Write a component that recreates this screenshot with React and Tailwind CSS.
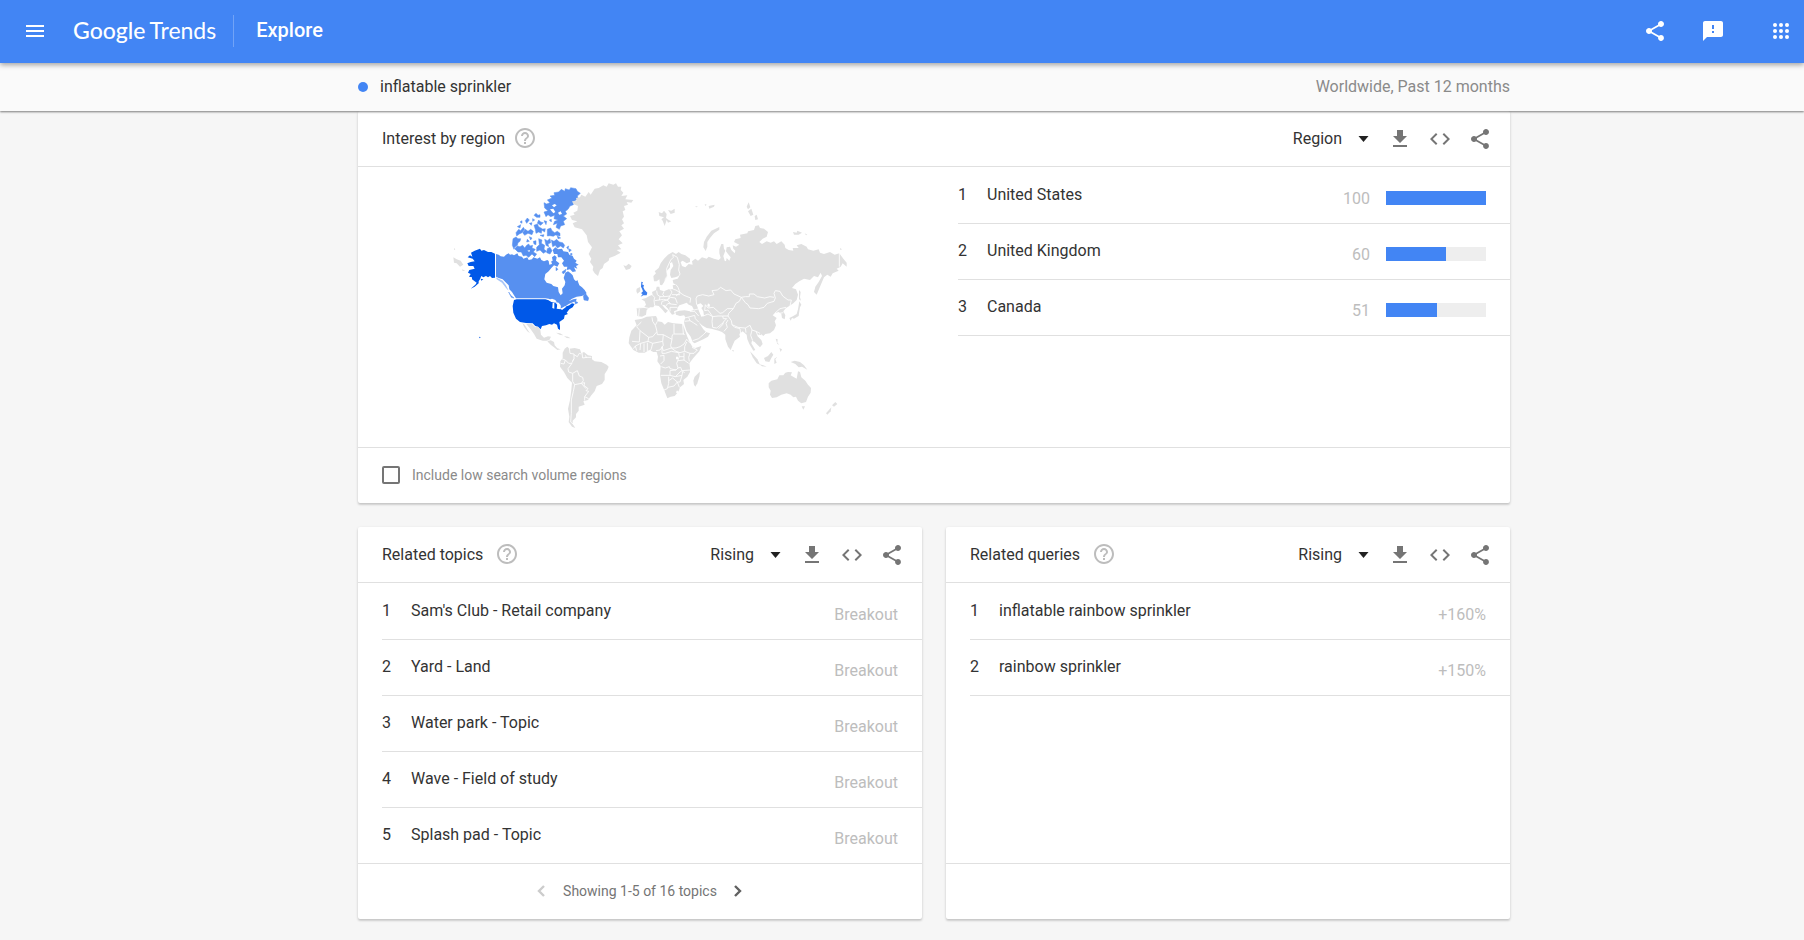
import React from "react";
import { MdMenu, MdShare, MdFeedback, MdHelpOutline, MdCode } from "react-icons/md";

const regions = [
  { name: "United States", value: 100 },
  { name: "United Kingdom", value: 60 },
  { name: "Canada", value: 51 },
];
const topics = ["Sam's Club - Retail company", "Yard - Land", "Water park - Topic", "Wave - Field of study", "Splash pad - Topic"].map(
  (name) => ({ name, value: "Breakout" })
);
const queries = [
  { name: "inflatable rainbow sprinkler", value: "+160%" },
  { name: "rainbow sprinkler", value: "+150%" },
];

function AppsIcon() {
  return (
    <svg viewBox="0 0 24 24" className="size-6" fill="currentColor" aria-hidden="true">
      {[6, 12, 18].map((y) => [6, 12, 18].map((x) => <circle key={`${x}-${y}`} cx={x} cy={y} r="2" />))}
    </svg>
  );
}

function DownloadIcon() {
  return (
    <svg viewBox="0 0 24 24" className="size-6" fill="currentColor" aria-hidden="true">
      <path d="M19 9h-4V3H9v6H5l7 7 7-7zM5 18v2h14v-2H5z" />
    </svg>
  );
}

function CaretIcon() {
  return (
    <svg viewBox="0 0 24 24" className="pointer-events-none absolute right-0 size-6 text-[#212121]" fill="currentColor" aria-hidden="true">
      <path d="M6.5 9h10l-5 6z" />
    </svg>
  );
}

function ChevronIcon({ points }) {
  return (
    <svg viewBox="0 0 24 24" className="size-6" fill="none" stroke="currentColor" strokeWidth="2.4" aria-hidden="true">
      <polyline points={points} />
    </svg>
  );
}

function IconButton({ label, children, className = "w-10" }) {
  return (
    <button type="button" aria-label={label} className={`flex h-10 items-center justify-center ${className}`}>
      {children}
    </button>
  );
}

function CardHeader({ title, option, others, helpGap = "ml-2" }) {
  return (
    <header className="flex h-14 items-center border-b border-[#e0e0e0] pr-2.5 pl-6">
      <h2 className="text-base text-[#333333]">{title}</h2>
      <button type="button" aria-label={`Help: ${title}`} className={`pb-0.5 text-[#bdbdbd] ${helpGap}`}>
        <MdHelpOutline className="size-6" />
      </button>
      <div className="relative mr-1 ml-auto flex items-center">
        <select aria-label={`${title} view`} defaultValue={option} className="field-sizing-content appearance-none bg-transparent pr-[34px] text-base text-[#333333]">
          {[option, ...others].map((o) => (
            <option key={o}>{o}</option>
          ))}
        </select>
        <CaretIcon />
      </div>
      <div className="flex text-[#757575]">
        <IconButton label="Download CSV"><DownloadIcon /></IconButton>
        <IconButton label="Embed"><MdCode className="size-6" /></IconButton>
        <IconButton label="Share"><MdShare className="size-6" /></IconButton>
      </div>
    </header>
  );
}

function RankedList({ items, bars = false }) {
  return (
    <ol className="pl-6">
      {items.map((item, i) => (
        <li key={item.name} className="flex h-14 items-center pr-6 text-base text-[#333333] shadow-[0_1px_0_#e0e0e0]">
          <span className="w-[29px]">{i + 1}</span>
          <span className="flex-1">{item.name}</span>
          <span className="pt-2 text-[#bdbdbd]">{item.value}</span>
          {bars && (
            <span className="mt-1.5 ml-4 block h-3.5 w-[100px] bg-[#eeeeee]">
              <span className="block h-full bg-[#4285f4]" style={{ width: `${item.value}%` }} />
            </span>
          )}
        </li>
      ))}
    </ol>
  );
}

function Card({ children, className = "" }) {
  return (
    <section className={`rounded-xs bg-white shadow-[0_1px_3px_rgba(0,0,0,0.14),0_2px_2px_rgba(0,0,0,0.1)] ${className}`}>{children}</section>
  );
}

const canada = [
  "168,252 176,254 182,259 192,260 198,254 206,250 210,254 216,253 222,256 232,250 236,258 246,260 250,266 262,262 266,270 276,268 280,262 292,266 300,262 304,270 312,274 322,270 330,276 338,272 336,262 344,256 350,262 348,272 358,280 352,290 342,286 334,294 326,304 316,312 313,328 320,338 334,342 340,348 354,352 356,366 362,376 368,370 366,356 374,346 376,336 371,324 376,308 384,304 392,310 398,316 402,328 408,334 412,330 418,346 426,352 434,360 440,370 426,378 410,380 396,386 386,394 400,388 410,386 408,394 400,396 386,402 372,412 362,416 362,408 350,402 344,394 334,390 326,386 316,385 228,385 222,376 216,366 208,358 206,346 196,336 188,328 176,324 168,320",
  "338,240 346,232 354,238 366,236 370,244 384,246 388,254 398,258 402,266 410,272 406,278 416,284 408,288 412,296 402,292 408,304 398,306 390,298 380,300 382,290 372,290 366,280 372,272 364,262 354,262 352,252 342,252",
  "219,206 228,201 234,206 242,206 240,214 234,218 232,226 224,232 222,238 217,226",
  "224,236 232,228 240,230 248,226 254,234 260,226 266,222 270,228 278,226 276,234 286,238 280,246 290,252 284,260 276,252 266,262 258,256 250,258 244,246 234,246",
  "312,98 320,102 330,98 322,90 336,84 330,78 344,76 342,68 356,66 364,58 374,64 376,56 388,60 392,53 408,56 412,64 421,70 412,78 414,86 402,94 400,104 390,108 384,118 376,124 380,132 370,138 380,146 370,154 374,164 362,168 358,178 348,172 352,160 340,164 344,154 354,150 342,146 344,136 332,140 324,134 318,140 312,126 324,122 314,114",
  "322,178 332,174 336,182 344,188 352,184 360,190 360,198 346,195 340,199 330,197 322,198",
  "228,188 236,178 242,182 250,172 254,178 246,188 238,192 230,198", "248,188 256,178 264,184 272,178 280,184 276,194 264,190 254,196",
  "256,152 262,144 268,150 260,160", "282,136 288,130 294,136 300,134 300,142 290,142", "296,150 302,156 310,158 302,166 292,160",
  "282,166 292,162 296,170 306,176 304,190 296,186 288,190 286,178", "232,170 242,164 240,174", "312,152 320,154 318,164",
  "296,206 306,210 304,220 314,226 312,238 320,244 310,250 300,240 290,244 290,232 298,224", "314,208 322,212 330,206 332,218 324,222 326,230 318,226",
  "334,210 342,214 350,208 358,216 368,218 374,226 370,234 362,228 352,234 346,226 338,230", "322,236 330,232 336,242 330,252 320,248",
  "268,200 276,204 272,210", "280,214 288,212 288,224 282,222", "366,306 378,298 376,306 370,312",
  "430,378 436,370 446,384 444,392 432,390", "390,252 396,250 396,256", "404,392 414,398 406,402",
  "206,366 212,376 222,384 214,382", "348,292 354,298 348,302",
  "240,156 246,152 246,160", "268,160 276,158 274,166", "278,146 284,150 278,154", "300,196 312,194 310,200", "302,178 316,176 314,186",
  "262,208 268,214 260,216", "328,150 334,148 334,156", "386,236 394,240 388,246", "380,232 386,228 384,238", "352,198 362,204 354,206",
];

const unitedStates = [
  "83,262 90,256 97,260 93,248 104,242 116,238 120,236 124,242 132,240 144,246 154,246 165,251 165,323 156,324 150,318 144,322 138,318 130,322 124,318 120,328 124,322 116,334 116,340 104,350 92,356 106,344 110,338 104,334 96,328 96,322 87,320 92,312 84,308 88,300 104,296 100,288 86,288 82,280 92,276 104,274 98,266",
  "122,326 130,328 124,332",
  "230,388 316,388 326,391 334,396 346,398 352,404 350,416 364,418 376,410 388,406 396,400 404,402 398,412 388,418 380,428 384,432 374,436 372,446 358,456 360,468 360,480 354,476 351,464 342,460 336,464 328,462 318,466 306,468 302,478 294,470 286,468 278,460 258,459 240,456 228,446 220,428 218,408 222,390",
  "117,500 122,502 119,505",
];

const alaskaPanhandle = ["168,322 176,326 188,332 198,346 206,362 198,354 186,338 170,328"];

const restOfAmericas = [
  "258,461 276,462 286,472 294,470 301,480 303,494 312,503 324,499 333,500 328,510 320,512 308,512 290,506 282,492 272,478 262,466",
  "247,459 254,464 262,478 270,490 262,484 252,470",
  "322,514 332,511 342,516 344,526 352,535 362,538 352,540 342,532 332,524",
  "348,488 360,490 370,496 360,495", "372,498 384,500 392,505 380,504",
  "368,548 374,536 382,530 388,536 404,534 420,538 424,550 432,546 444,556 456,558 456,568 464,574 484,576 500,584 506,590 502,600 494,612 494,630 486,642 470,648 464,664 454,676 444,690 430,694 434,704 416,710 416,722 408,732 408,742 398,752 398,762 406,774 396,770 386,756 388,740 384,716 390,690 394,660 396,638 382,624 372,606 360,590 361,574 368,564",
  "390,138 404,134 400,128 412,122 414,108 400,102 396,94 410,92 408,84 420,82 424,74 436,80 446,66 452,74 464,56 476,54 490,46 500,50 506,40 520,44 528,40 534,50 544,50 542,60 550,68 544,78 562,76 556,88 580,90 574,98 560,96 564,104 552,108 556,120 548,124 552,140 546,148 552,160 544,166 552,176 538,184 546,196 536,208 548,220 534,226 544,238 530,240 542,248 524,258 508,264 506,272 492,282 488,294 480,300 474,318 464,310 458,300 460,290 450,276 454,266 446,252 456,232 444,216 440,196 426,178 404,172 398,160 412,154 396,150",
  "550,286 558,288 566,281 575,288 570,296 558,300", "40,262 50,268 62,272 70,284 60,290 50,280 42,278", "66,298 76,302 68,303", "42,234 46,238 42,240",
  "590,356 600,351 601,364 592,371 589,364",
];

const easternLand = [
  "40,318 48,310 44,304 56,294 62,280 72,266 84,254 98,246 108,252 116,246 124,252 136,256 150,266 150,276 140,280 128,272 122,276 126,288 136,292 146,282 158,284 156,274 166,266 174,272 186,262 200,266 206,260 222,266 236,270 242,264 238,250 238,238 244,222 250,222 252,236 256,242 250,258 254,272 258,274 260,264 268,272 272,262 264,252 258,244 260,232 270,230 274,240 284,250 286,242 280,236 278,226 288,230 298,224 282,216 286,208 302,204 300,194 322,190 324,184 342,180 346,168 356,166 360,174 372,176 384,186 380,200 368,206 358,216 366,222 380,214 392,218 402,214 410,222 424,214 434,224 436,234 446,240 460,242 458,234 476,234 470,226 484,222 500,230 504,238 520,242 536,238 540,248 552,252 570,246 584,254 598,250 610,266 620,278 620,290 608,280 602,290 590,296 596,302 578,310 572,320 562,314 552,322 546,336 540,350 530,374 522,366 526,350 536,336 546,318 542,308 534,322 522,318 510,330 492,326 478,334 466,342 456,354 468,358 474,374 470,390 460,400 448,408 438,414 430,424 436,436 434,448 426,444 424,432 416,426 404,430 398,436 410,444 404,454 408,466 402,480 390,490 376,492 370,498 360,490 352,498 364,510 368,522 360,532 352,524 344,516 336,512 334,520 346,540 340,542 328,522 322,508 320,494 308,484 298,492 300,500 284,512 278,526 272,540 264,530 256,508 256,494 246,486 236,482 214,476 200,474 186,466 176,456 190,478 198,486 210,490 204,500 190,508 164,520 158,516 152,500 140,484 134,466 132,456 136,442 132,436 120,438 108,434 106,426 118,422 134,421 150,424 162,420 156,408 146,404 140,398 130,402 118,406 112,414 112,420 102,424 104,432 96,434 90,426 84,416 74,406 66,404 74,414 84,422 76,430 66,418 56,408 44,406 40,412 30,412 20,420 18,434 6,440 -8,438 -10,414 12,412 18,404 14,394 4,388 18,384 28,378 38,374 36,366 48,360 50,350 58,350 60,360 72,364 86,358 100,358 98,346 108,344 100,340 98,330 112,326 116,318 106,322 94,324 90,314 92,300 100,288 96,276 90,280 90,292 80,304 82,318 74,334 66,346 60,344 58,328 50,334 42,334",
  "-16,450 6,446 20,440 48,438 52,446 52,454 66,456 74,464 84,456 100,460 128,462 134,478 142,500 150,518 158,532 166,534 184,528 178,544 160,564 148,580 150,594 150,606 142,620 130,630 132,642 120,652 116,664 104,678 92,680 82,685 74,664 64,640 60,616 62,588 52,574 54,560 50,546 40,546 28,540 14,548 -4,548 -20,540 -34,520 -32,502 -26,482 -10,466",
  "162,644 160,632 164,620 176,608 180,605 178,620 172,640 166,650",
  "386,640 394,632 412,628 418,616 430,616 436,608 444,606 456,607 452,616 462,622 470,626 474,604 480,606 484,622 496,632 504,644 513,654 512,668 504,680 498,696 484,700 474,692 468,680 460,682 452,674 440,670 424,674 410,682 396,684 390,674 392,662 386,652",
  "485,709 495,709 490,719", "586,696 592,702 582,710 576,706", "574,712 572,724 562,734 558,730",
  "452,576 464,572 480,576 492,586 502,599 486,590 476,592 466,582", "330,544 340,554 352,568 360,584 350,580 338,562", "358,583 370,586 380,590 366,589",
  "372,564 384,558 394,546 400,554 394,564 388,576 376,574", "403,566 412,560 406,568 410,578 403,582", "407,506 413,508 412,518 418,524 412,522", "418,534 426,538 422,546",
  "478,394 484,404 480,412 478,424 476,438 462,446 456,444 452,452 448,444 460,438 470,432 474,418 476,406", "477,360 482,366 480,382 483,392 477,388",
  "238,171 238,179 222,190 210,204 202,216 202,230 197,243 190,232 192,216 200,200 214,182", "56,126 66,130 72,122 80,132 78,144 86,150 94,154 84,158 80,150 74,168 68,152 64,148 72,142 58,138", "84,120 94,122 104,116 104,128 92,132",
  "320,110 326,97 331,112 324,118", "324,124 334,116 340,134 332,138", "344,138 350,134 354,148 346,150", "459,186 470,188 472,182 486,188 476,194 462,194", "494,190 502,194 498,196",
  "166,108 174,110 168,112", "194,102 200,104 196,108", "206,108 224,104 222,110 208,116", "600,234 606,238 601,240", "276,540 281,540 280,546", "356,472 364,496 358,494",
];

const europeAsiaBorders = [
  "74,346 76,326 82,318 80,296 92,270 100,262 98,254", "98,254 112,262 118,284 116,300 120,312 112,326",
  "108,344 114,352 120,368 132,376 152,384 150,398", "100,358 108,360 120,368", "72,364 68,374 74,380 90,378 96,366 90,358", "50,362 52,374 60,380 58,390 70,388 82,390 90,378", "96,374 120,374",
  "36,374 44,382 42,392 44,406", "60,380 74,380", "44,392 58,390", "64,404 66,394 82,390 92,402 110,404", "76,410 84,400 92,402", "90,424 90,412 112,412", "82,390 92,382 106,384 112,400",
  "120,368 108,378", "12,412 30,416", "-8,414 16,412", "-2,416 -4,438",
  "162,420 178,416", "150,424 164,424 176,438", "164,436 166,446 176,456", "134,444 150,440 164,436", "146,442 150,452 160,458 172,466", "134,454 150,452", "158,512 176,506 190,494 198,486",
  "170,404 168,386 172,378 188,374 206,378 222,374 216,362 232,360 242,352 258,362 272,360 282,372 304,382", "304,382 298,394 288,400 280,416 262,416 248,428 240,430 220,412 204,414 196,404 194,422",
  "304,382 316,380 328,380 328,372 342,372 352,380 374,384 390,380 402,382", "304,382 316,398 324,404 330,414 356,416 372,412 382,400 402,394 406,384 402,370 406,362 420,364 428,378 444,390 454,390 450,408",
  "280,416 266,430 264,438 274,452 276,464 294,472 316,474 330,466", "316,474 318,488", "330,466 336,480 348,484 360,490", "336,480 332,496 338,512", "348,484 354,498 364,506",
  "194,422 204,420 218,440 234,438 248,438 264,438", "190,438 204,432 218,440 216,454 218,472", "248,438 250,446 260,446 250,456 248,464 236,476", "218,472 230,474 250,458", "264,450 258,460 262,472 252,484", "276,464 284,472 300,476 302,490",
  "404,430 420,416 438,412", "598,248 598,290", "418,430 430,428",
];

const africaBorders = [
  "128,462 130,492 134,494", "102,462 102,492 132,492", "100,492 96,498 96,508 70,494 52,494 50,480 46,466 52,454", "36,442 38,454 46,466", "50,486 38,500 26,502 0,482 -10,470 4,456", "0,482 -2,516 -24,514", "26,502 24,514 2,520 0,540", "70,494 68,514 38,520 24,514",
  "38,520 34,536 30,544", "68,514 70,526 60,540 48,542", "96,508 92,526 94,534 70,542 66,530", "94,534 108,534 120,530 132,522 140,508 152,520", "140,516 134,530 134,544 120,548 108,544 94,534", "134,544 150,550 162,550 172,540 156,532",
  "66,530 66,550 76,550 94,544 116,548 118,560 110,580 114,594 108,600 90,596 88,590 76,594 64,590", "60,558 72,556 72,572 62,582", "118,560 132,560 132,548", "132,560 132,570 146,580", "114,572 132,570", "114,594 122,592 126,602 150,600",
  "108,600 90,602 90,616 62,616", "90,616 106,620 120,606 126,602", "106,620 126,616 128,604 134,608", "86,620 86,640 82,656 72,660", "86,632 98,624 112,636 102,648 84,652", "112,636 120,636 126,616", "112,636 118,652",
  "2,520 -14,528 -20,536", "-14,528 -10,542", "12,520 12,546", "22,518 22,544", "150,550 146,562 148,574",
];

const southAmericaBorders = [
  "388,534 390,550 402,552 402,566 396,578", "364,566 376,570 386,580 396,580 384,596 386,606 398,610 398,634", "402,566 398,572", "402,554 412,560 418,550 424,552", "426,548 428,564 440,562 454,562", "436,556 440,564", "362,580 372,582 376,570",
  "398,610 412,602 418,618 428,622 430,632 424,640 404,644 398,634", "404,644 400,664 394,690 394,730 392,756 402,764", "424,640 434,638 432,646 444,656 438,662 446,664 434,680 434,692", "424,640 438,656", "434,680 446,686",
];

const polygons = (list) => list.map((points) => <polygon key={points} points={points} />);
const lines = (list) => list.map((points) => <polyline key={points} points={points} />);

function WorldMap() {
  return (
    <svg viewBox="-246 -9 1728 840" className="h-[280px] w-full" role="img" aria-label="Interest by region on a world map">
      <g fill="#5790f0">{polygons(canada)}</g>
      <g fill="none" stroke="#5790f0" strokeWidth="1.5">{polygons(canada.slice(2))}</g>
      <g fill="#0058e8">{polygons(unitedStates)}</g>
      <g fill="#a9c6f7">{polygons(alaskaPanhandle)}</g>
      <g fill="#e0e0e0">{polygons(restOfAmericas)}</g>
      <g fill="none" stroke="#ffffff" strokeWidth="2.5" strokeLinejoin="round">{lines(southAmericaBorders)}</g>
      <g fill="#ffffff">
        <polygon points="326,390 336,386 346,390 350,396 338,396" />
        <polygon points="338,398 343,398 343,416 337,414" />
        <polygon points="346,396 356,398 362,406 360,418 352,414 352,404" />
        <polygon points="362,416 376,408 378,411 366,420" />
        <polygon points="326,274 332,270 336,282 328,284" />
        <polygon points="326,164 336,158 338,168 330,172" />
        <polygon points="336,106 344,102 350,106 342,112" />
        <polygon points="330,118 340,116 346,126 340,130" />
        <polygon points="354,128 362,124 366,132 358,134" />
        <polygon points="262,242 270,240 268,246" />
      </g>
      <polygon fill="#3b7ded" points="604,335 609,337 606,343 612,346 610,352 614,360 622,368 620,376 610,376 602,380 608,372 603,370 609,364 606,356 603,350" />
      <g transform="translate(600 0)">
        <g fill="#e0e0e0">{polygons(easternLand)}</g>
        <g fill="#ffffff">
          <polygon points="170,404 182,400 190,408 184,414 190,424 192,438 184,440 178,426" />
          <polygon points="204,400 210,404 208,412 202,408" />
          <polygon points="108,560 114,560 114,568 108,568" />
          <polygon points="110,662 116,662 114,670 108,668" />
        </g>
        <g fill="none" stroke="#ffffff" strokeWidth="2.5" strokeLinejoin="round">
          {lines(europeAsiaBorders)}
          {lines(africaBorders)}
        </g>
      </g>
    </svg>
  );
}

export default function App() {
  return (
    <div className="min-h-screen bg-[#f6f6f6] pb-5 font-['Roboto',sans-serif]">
      <div className="sticky top-0 z-10">
        <header className="relative z-10 flex h-[63px] items-center bg-[#4285f4] pr-[11px] pb-px pl-[23px] text-white shadow-[0_2px_5px_rgba(0,0,0,0.35)]">
          <button type="button" aria-label="Main menu"><MdMenu className="size-6" /></button>
          <a href="#home" className="ml-[26px] flex items-baseline gap-1 pb-0.5 font-['Lato',sans-serif] text-[23px]">
            <span className="font-medium">Google</span>
            <span>Trends</span>
          </a>
          <span className="ml-[17px] h-8 w-px bg-white/25" />
          <h1 className="ml-[22px] pb-0.5 text-xl font-medium">Explore</h1>
          <nav className="ml-auto flex items-center">
            <IconButton label="Share"><MdShare className="size-6" /></IconButton>
            <IconButton label="Send feedback" className="ml-[18px] w-10"><MdFeedback className="size-6" /></IconButton>
            <IconButton label="Google apps" className="ml-9 w-6"><AppsIcon /></IconButton>
          </nav>
        </header>
        <div className="bg-[#fafafa] pl-16 shadow-[0_1px_2px_rgba(0,0,0,0.5)]">
          <div className="mx-auto flex h-12 max-w-[1152px] items-center text-base">
            <span className="size-2.5 rounded-full bg-[#4285f4]" />
            <span className="ml-3 text-[#333333]">inflatable sprinkler</span>
            <span className="ml-auto text-[#8a8a8a]">Worldwide, Past 12 months</span>
          </div>
        </div>
      </div>

      <main className="pl-16">
        <div className="mx-auto grid max-w-[1152px] grid-cols-2 gap-6">
          <Card className="col-span-2">
            <CardHeader title="Interest by region" option="Region" others={["City"]} />
            <div className="grid min-h-[280px] grid-cols-2">
              <WorldMap />
              <RankedList items={regions} bars />
            </div>
            <footer className="flex h-14 items-center border-t border-[#e0e0e0] px-6 pb-0.5">
              <label className="flex items-center gap-3 text-sm text-[#8a8a8a]">
                <input type="checkbox" className="size-[18px] appearance-none rounded-xs border-2 border-[#757575] checked:bg-[#4285f4]" />
                Include low search volume regions
              </label>
            </footer>
          </Card>

          <Card>
            <CardHeader title="Related topics" option="Rising" others={["Top"]} helpGap="ml-3" />
            <div className="min-h-[280px]">
              <RankedList items={topics} />
            </div>
            <footer className="flex h-14 items-center justify-center gap-2.5 border-t border-[#e0e0e0] pb-0.5 text-sm text-[#757575]">
              <button type="button" aria-label="Previous" disabled className="text-[#cccccc]"><ChevronIcon points="15,7 10,12 15,17" /></button>
              Showing 1-5 of 16 topics
              <button type="button" aria-label="Next" className="text-[#616161]"><ChevronIcon points="8,7 13,12 8,17" /></button>
            </footer>
          </Card>

          <Card>
            <CardHeader title="Related queries" option="Rising" others={["Top"]} helpGap="ml-3" />
            <div className="min-h-[280px]">
              <RankedList items={queries} />
            </div>
            <footer className="h-14 border-t border-[#e0e0e0]" />
          </Card>
        </div>
      </main>
    </div>
  );
}
